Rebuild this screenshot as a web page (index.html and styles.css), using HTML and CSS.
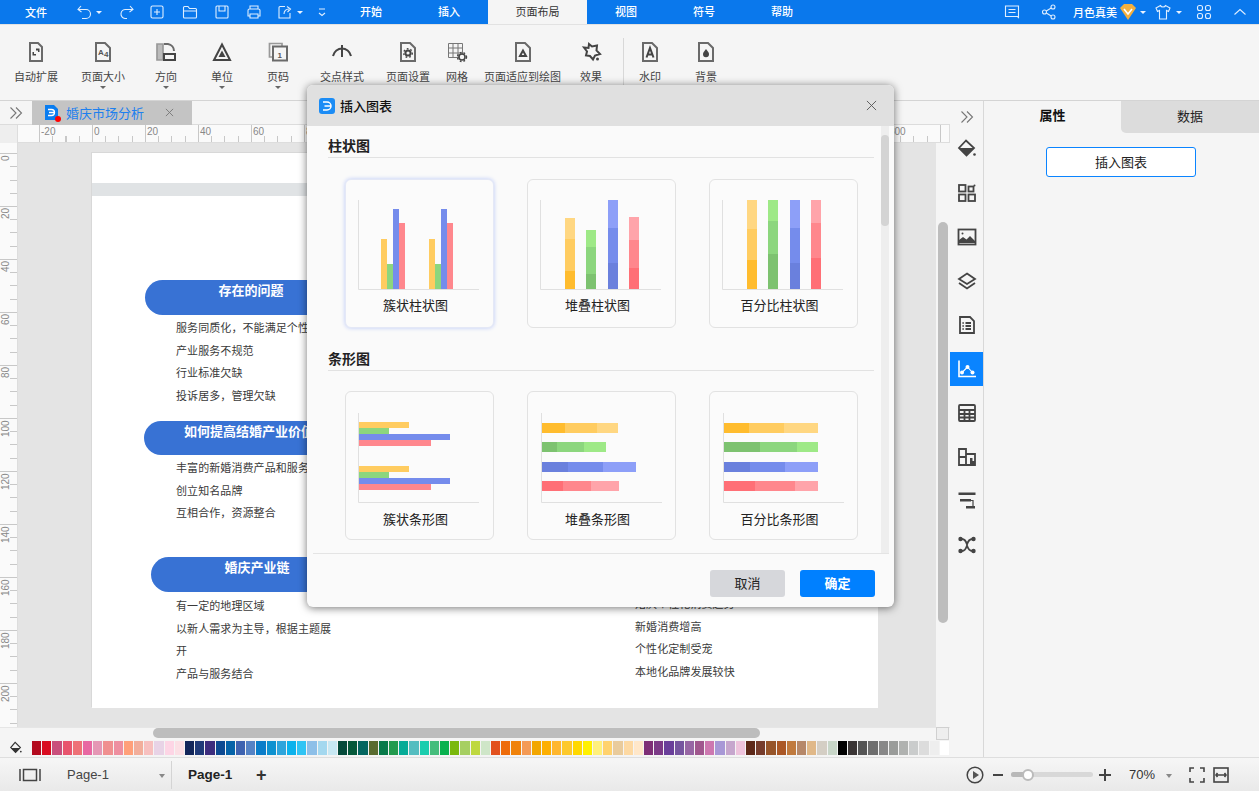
FILE: index.html
```html
<!DOCTYPE html>
<html lang="zh-CN">
<head>
<meta charset="utf-8">
<title>婚庆市场分析</title>
<link rel="stylesheet" href="styles.css">
</head>
<body>
<div class="app">
  <header class="titlebar">
    <div class="tb-file">文件</div>
    <div class="qa">
      <svg class="ic16" viewBox="0 0 16 16"><path d="M5 2 2 5.500 5.500 8M2.500 5.500H10a4 4 0 0 1 0 9H6"/></svg>
      <span class="caret-w ml-4"></span>
      <svg class="ic16 ml-17" viewBox="0 0 16 16"><path d="M11 2 14 5.500 10.500 8M13.500 5.500H7a4.500 4.500 0 0 0-1 9h2"/></svg>
      <svg class="ic16 ml-14" viewBox="0 0 16 16"><rect x="2" y="2" width="12" height="12" rx="1.500"/><path d="M8 5v6M5 8h6"/></svg>
      <svg class="ic16 ml-17" viewBox="0 0 16 16"><path d="M1.500 13V3.500a1 1 0 0 1 1-1h3.500l1.500 2h6a1 1 0 0 1 1 1V13a1 1 0 0 1-1 1h-11a1 1 0 0 1-1-1zM1.500 7h13"/></svg>
      <svg class="ic16 ml-16" viewBox="0 0 16 16"><rect x="2" y="2" width="12" height="12" rx="1"/><path d="M5 2v5h6V2"/></svg>
      <svg class="ic16 ml-16" viewBox="0 0 16 16"><path d="M4 5V2h8v3M4 12H2V6.500a1.500 1.500 0 0 1 1.500-1.500h9A1.500 1.500 0 0 1 14 6.500V12h-2M4 10h8v4H4z"/></svg>
      <svg class="ic16 ml-15" viewBox="0 0 16 16"><path d="M8 2.500H3a1 1 0 0 0-1 1V14h11V9M7 10c0-3 2-5 5-5M10 2.500l3.500 2.500-3 3"/></svg>
      <span class="caret-w ml-4"></span>
      <svg class="ic12 ml-13" viewBox="0 0 12 16"><path d="M3 5h6M3 9l3 2.500L9 9"/></svg>
    </div>
    <nav class="tb-tabs">
      <span class="tb-tab">开始</span>
      <span class="tb-tab">插入</span>
      <span class="tb-tab tb-tab-on">页面布局</span>
      <span class="tb-tab">视图</span>
      <span class="tb-tab">符号</span>
      <span class="tb-tab">帮助</span>
    </nav>
    <div class="tb-right">
      <svg class="ic16" viewBox="0 0 16 16"><path d="M1.500 2h13v11.500l-1-1h-12zM4.500 5.500h7M4.500 8.500h7"/></svg>
      <svg class="ic16 ml-21" viewBox="0 0 16 16"><circle cx="3.500" cy="8" r="2"/><circle cx="12" cy="3" r="2"/><circle cx="12" cy="13" r="2"/><path d="M5.300 7 10.200 4M5.300 9l4.900 3"/></svg>
      <span class="tb-user ml-16">月色真美</span>
      <svg class="vip ml-2" viewBox="0 0 18 18"><path class="vip-gem" d="M1 5 5 1h8l4 4-8 12z"/><path class="vip-v" d="M5 6l4 5 4-5"/></svg>
      <span class="caret-w ml-3"></span>
      <svg class="ic16 ml-9" viewBox="0 0 16 16"><path d="M5.500 1.500 1 4l1.500 3.500 2-1V15h7V6.500l2 1L15 4l-4.500-2.500C10 3.500 6 3.500 5.500 1.500z"/></svg>
      <span class="caret-w ml-5"></span>
      <svg class="ic16 ml-14" viewBox="0 0 16 16"><rect x="1.500" y="1.500" width="5" height="5" rx="2"/><rect x="9.500" y="1.500" width="5" height="5" rx="2"/><rect x="1.500" y="9.500" width="5" height="5" rx="2"/><rect x="9.500" y="9.500" width="5" height="5" rx="2"/></svg>
      <svg class="ic16 ml-20" viewBox="0 0 16 16"><path d="M2.500 10.500 8 5.500l5.500 5"/></svg>
    </div>
  </header>

  <section class="ribbon">
    <div class="rb-item">
      <svg class="rb-ic" viewBox="0 0 22 22"><path class="l" d="M5 2h8l4 4v14H5z"/><path class="f" d="M11 7.500h3.500V11H13V9.500h-2zM7.500 11H9v2h2v1.500H7.500z"/></svg>
      <span>自动扩展</span>
    </div>
    <div class="rb-item ml-23">
      <svg class="rb-ic" viewBox="0 0 22 22"><path class="l" d="M4 2h9l5 5v13H4z"/><text class="rb-tx" x="6" y="14">A</text><text class="rb-tx" x="12" y="16">4</text></svg>
      <span>页面大小</span><i class="caret-g"></i>
    </div>
    <div class="rb-item ml-30">
      <svg class="rb-ic" viewBox="0 0 22 22"><path class="lg" d="M2 19V3h6v16z"/><path class="l" d="M9 3h4a7 7 0 0 1 6 7"/><path class="k" d="M9 13h11v6H9z"/></svg>
      <span>方向</span><i class="caret-g"></i>
    </div>
    <div class="rb-item ml-34">
      <svg class="rb-ic" viewBox="0 0 22 22"><path class="k" d="M11 3.500 3 19h16z"/><path class="f" d="M11 9.500 7.500 16h7z"/></svg>
      <span>单位</span><i class="caret-g"></i>
    </div>
    <div class="rb-item ml-34">
      <svg class="rb-ic" viewBox="0 0 22 22"><path class="lo" d="M15 5V2.500H2.500V16H6"/><rect class="l" x="6" y="5.500" width="14" height="14"/><text class="rb-tx" x="10.500" y="17">1</text></svg>
      <span>页码</span><i class="caret-g"></i>
    </div>
    <div class="rb-item ml-31">
      <svg class="rb-ic" viewBox="0 0 22 22"><path class="k" d="M2 15c1-4.500 5-7.500 9-7.500s8 3 9 7.500M11 4v12"/></svg>
      <span>交点样式</span>
    </div>
    <div class="rb-item ml-22">
      <svg class="rb-ic" viewBox="0 0 22 22"><path class="l" d="M4 2h9l5 5v13H4z"/><circle class="ring" cx="11" cy="12" r="2.600"/><circle class="teeth" cx="11" cy="12" r="4.300"/></svg>
      <span>页面设置</span>
    </div>
    <div class="rb-item ml-16">
      <svg class="rb-ic" viewBox="0 0 22 22"><path class="thin" d="M2.500 2.500h14v14h-14zM7 2.500v14M12 2.500v14M2.500 7h14M2.500 12h14"/><circle class="gear" cx="16" cy="16" r="3"/><circle class="teeth" cx="16" cy="16" r="4.500"/></svg>
      <span>网格</span>
    </div>
    <div class="rb-item ml-16">
      <svg class="rb-ic" viewBox="0 0 22 22"><path class="l" d="M4 2h9l5 5v13H4z"/><path class="k" d="M11 9.500l-3 5.500h6z"/></svg>
      <span>页面适应到绘图</span>
    </div>
    <div class="rb-item ml-19">
      <svg class="rb-ic" viewBox="0 0 22 22"><path class="k" d="M9 3l3 2.500 5-1-.5 5L20 13l-5 1.500-2 4-3-3.500-4-.5 1-4L4 6.500 8.500 7z"/><circle class="f" cx="17.500" cy="18" r="1.500"/></svg>
      <span>效果</span>
    </div>
    <div class="rb-sep"></div>
    <div class="rb-item ml-15">
      <svg class="rb-ic" viewBox="0 0 22 22"><path class="l" d="M4 2h9l5 5v13H4z"/><path class="k" d="M7.500 16.500 11 7l3.500 9.500M8.500 13.500h5"/></svg>
      <span>水印</span>
    </div>
    <div class="rb-item ml-34">
      <svg class="rb-ic" viewBox="0 0 22 22"><path class="l" d="M4 2h9l5 5v13H4z"/><path class="f" d="M11 8c2 2.500 3 3.700 3 5.200a3 3 0 0 1-6 0C8 11.700 9 10.500 11 8z"/></svg>
      <span>背景</span>
    </div>
  </section>

  <div class="workspace">
    <div class="doc-col">
      <div class="doc-tabs">
        <svg class="chev" viewBox="0 0 14 14"><path d="M1.500 1.500 7 7l-5.500 5.500M7 1.500 12.500 7 7 12.500"/></svg>
        <div class="doc-tab">
          <span class="doc-ic">
            <svg viewBox="0 0 13 15"><path class="doc-blue" d="M0 0h9l4 4v11H0z"/><path class="doc-d" d="M3 4.500h3.500a3 3 0 0 1 0 6H3M4 7.500h5"/></svg>
            <i class="doc-dot"></i>
          </span>
          <span class="doc-name">婚庆市场分析</span>
          <svg class="doc-x" viewBox="0 0 10 10"><path d="M1 1l8 8M9 1l-8 8"/></svg>
        </div>
      </div>
      <div class="ruler-row">
        <div class="ruler-corner"></div>
        <div class="ruler-h">
          <span>-20</span><span>0</span><span>20</span><span>40</span><span>60</span><span>80</span><span>100</span><span>120</span><span>140</span><span>160</span><span>180</span><span>200</span><span>220</span><span>240</span><span>260</span><span>280</span><span>300</span>
        </div>
      </div>
      <div class="canvas-row">
        <div class="ruler-v">
          <span>0</span><span>20</span><span>40</span><span>60</span><span>80</span><span>100</span><span>120</span><span>140</span><span>160</span><span>180</span><span>200</span>
        </div>
        <div class="canvas">
          <div class="page">
            <div class="band"></div>
            <div class="pill pill-a">存在的问题</div>
            <ul class="list list-a">
              <li>服务同质化，不能满足个性化需求</li>
              <li>产业服务不规范</li>
              <li>行业标准欠缺</li>
              <li>投诉居多，管理欠缺</li>
            </ul>
            <div class="pill pill-b">如何提高结婚产业价值</div>
            <ul class="list list-b">
              <li>丰富的新婚消费产品和服务</li>
              <li>创立知名品牌</li>
              <li>互相合作，资源整合</li>
            </ul>
            <div class="pill pill-c">婚庆产业链</div>
            <ul class="list list-c">
              <li>有一定的地理区域</li>
              <li>以新人需求为主导，根据主题展</li>
              <li>开</li>
              <li>产品与服务结合</li>
            </ul>
            <ul class="list list-d">
              <li>婚庆个性化消费趋势</li>
              <li>新婚消费增高</li>
              <li>个性化定制受宠</li>
              <li>本地化品牌发展较快</li>
            </ul>
          </div>
        </div>
        <div class="vscroll"><div class="vthumb"></div></div>
      </div>
      <div class="hscroll-row">
        <div class="hthumb"></div>
        <div class="scroll-corner"></div>
      </div>
      <div class="palette">
        <svg class="paint" viewBox="0 0 16 16"><path class="paint-o" d="M7 1.500 2 7.500 7.500 13 13 7.500z"/><path class="paint-f" d="M2.500 8h10L7.500 13z"/><circle class="paint-f" cx="13.500" cy="12" r="1"/></svg>
        <div class="swatches">
          <i class="c1"></i><i class="c2"></i><i class="c3"></i><i class="c4"></i><i class="c5"></i><i class="c6"></i><i class="c7"></i><i class="c8"></i><i class="c9"></i><i class="c10"></i><i class="c11"></i><i class="c12"></i><i class="c13"></i><i class="c14"></i><i class="c15"></i>
          <i class="c16"></i><i class="c17"></i><i class="c18"></i><i class="c19"></i><i class="c20"></i><i class="c21"></i><i class="c22"></i><i class="c23"></i><i class="c24"></i><i class="c25"></i><i class="c26"></i><i class="c27"></i><i class="c28"></i><i class="c29"></i><i class="c30"></i>
          <i class="c31"></i><i class="c32"></i><i class="c33"></i><i class="c34"></i><i class="c35"></i><i class="c36"></i><i class="c37"></i><i class="c38"></i><i class="c39"></i><i class="c40"></i><i class="c41"></i><i class="c42"></i><i class="c43"></i><i class="c44"></i><i class="c45"></i>
          <i class="c46"></i><i class="c47"></i><i class="c48"></i><i class="c49"></i><i class="c50"></i><i class="c51"></i><i class="c52"></i><i class="c53"></i><i class="c54"></i><i class="c55"></i><i class="c56"></i><i class="c57"></i><i class="c58"></i><i class="c59"></i><i class="c60"></i>
          <i class="c61"></i><i class="c62"></i><i class="c63"></i><i class="c64"></i><i class="c65"></i><i class="c66"></i><i class="c67"></i><i class="c68"></i><i class="c69"></i><i class="c70"></i>
          <i class="c71"></i><i class="c72"></i><i class="c73"></i><i class="c74"></i><i class="c75"></i><i class="c76"></i><i class="c77"></i><i class="c78"></i><i class="c79"></i>
          <i class="c80"></i><i class="c81"></i><i class="c82"></i><i class="c83"></i><i class="c84"></i><i class="c85"></i><i class="c86"></i><i class="c87"></i><i class="c88"></i><i class="c89"></i><i class="c90"></i>
        </div>
      </div>
    </div>

    <aside class="strip">
      <svg class="chev chev-r" viewBox="0 0 14 14"><path d="M1.500 1.500 7 7l-5.500 5.500M7 1.500 12.500 7 7 12.500"/></svg>
      <div class="st-btn"><svg viewBox="0 0 20 20"><path class="s" d="M9 1.500 2 9l7.500 7.500L17 9z"/><path class="sf" d="M2.500 9h14.500l-7.500 7.500z"/><circle class="sf" cx="17.500" cy="15.500" r="1.300"/></svg></div>
      <div class="st-btn"><svg viewBox="0 0 20 20"><rect class="s" x="2" y="2" width="6.500" height="6.500"/><rect class="s" x="11.500" y="3.500" width="5" height="5"/><rect class="s" x="2" y="11.500" width="6.500" height="6.500"/><rect class="s" x="11.500" y="11.500" width="6.500" height="6.500"/><circle class="sf" cx="17.500" cy="2.500" r="1"/></svg></div>
      <div class="st-btn"><svg viewBox="0 0 20 20"><rect class="s" x="1.500" y="2.500" width="17" height="15"/><path class="sf" d="M2 16v-3l4-3 3.500 2.500L13 9l5 5v2z"/><circle class="sf" cx="5.500" cy="6.500" r="1"/></svg></div>
      <div class="st-btn"><svg viewBox="0 0 20 20"><path class="s" d="M10 2.500 18 8l-8 5-8-5z"/><path class="s" d="M2 12l8 5.500 8-5.500"/></svg></div>
      <div class="st-btn"><svg viewBox="0 0 20 20"><path class="s" d="M3 2h10l4 4v12H3z"/><path class="s" d="M8.500 8H14M8.500 11H14M8.500 14H14"/><path class="s" d="M5.500 8h1.200M5.500 11h1.200M5.500 14h1.200"/></svg></div>
      <div class="st-btn st-on"><svg viewBox="0 0 20 20"><path class="w" d="M2 1.500v16h17"/><path class="w-thin" d="M5 13.500 10.500 8l5 5.500"/><circle class="wf" cx="5" cy="13.500" r="2"/><circle class="wf" cx="10.500" cy="8" r="2"/><circle class="wf" cx="15.500" cy="13.500" r="2"/></svg></div>
      <div class="st-btn"><svg viewBox="0 0 20 20"><rect class="s" x="2" y="2" width="16" height="16" rx="1"/><path class="s" d="M2 7h16M2 11h16M2 14.500h16M7.500 7v11M12.500 7v11"/></svg></div>
      <div class="st-btn"><svg viewBox="0 0 20 20"><path class="s" d="M2 2h7v5h9v11H2zM2 10h7v8M9 7v3"/><path class="sf" d="M13 11h2.500v3H18v4h-5z"/></svg></div>
      <div class="st-btn"><svg viewBox="0 0 20 20"><path class="sf" d="M1.500 1.500h17v2.500h-17zM3 8h11v2.500H3zM9 15h9v2.500H9z"/><path class="s-thin" d="M14 9.500h2V15"/></svg></div>
      <div class="st-btn"><svg viewBox="0 0 20 20"><path class="s" d="M5 4c3 0 4 2 5 5.500C11 6 13 4 15.500 4M5 16c3 0 4-2 5-5.500 1 3.500 3 5.500 5.500 5.500"/><circle class="sf" cx="3.500" cy="4" r="2.200"/><circle class="sf" cx="16.500" cy="4" r="2.200"/><circle class="sf" cx="3.500" cy="16" r="2.200"/><circle class="sf" cx="16.500" cy="16" r="2.200"/></svg></div>
    </aside>

    <aside class="panel">
      <div class="panel-tabs">
        <div class="pt pt-on">属性</div>
        <div class="pt pt-off">数据</div>
      </div>
      <button class="panel-btn">插入图表</button>
    </aside>
  </div>

  <footer class="status">
    <svg class="st-page" viewBox="0 0 22 14"><path d="M1 1v12M21 1v12"/><rect x="4.500" y="1.500" width="13" height="11"/></svg>
    <span class="st-name">Page-1</span>
    <i class="caret-s"></i>
    <span class="st-sep"></span>
    <span class="st-cur">Page-1</span>
    <span class="st-add">+</span>
    <div class="st-right">
      <svg class="st-play" viewBox="0 0 18 18"><circle cx="9" cy="9" r="7.800"/><path class="st-tri" d="M7 5l6 4-6 4z"/></svg>
      <span class="zbar ml-9"></span>
      <div class="slider ml-8"><span class="slider-fill"></span><span class="slider-knob"></span></div>
      <span class="zplus ml-6"></span>
      <span class="zoom-val">70%</span>
      <i class="caret-s ml-11"></i>
      <svg class="st-full ml-17" viewBox="0 0 16 16"><path d="M1 5V1h4M11 1h4v4M15 11v4h-4M5 15H1v-4"/></svg>
      <svg class="st-full ml-8" viewBox="0 0 16 16"><rect x="1" y="1" width="14" height="14"/><path d="M4 8h8M4.500 6 3 8l1.500 2M11.500 6 13 8l-1.500 2"/></svg>
    </div>
  </footer>

  <div class="dialog">
    <div class="dlg-head">
      <svg class="dlg-logo" viewBox="0 0 16 16"><rect class="dlg-logo-bg" width="16" height="16" rx="3"/><path class="dlg-logo-d" d="M4 4h4a4 4 0 0 1 0 8H4M5.500 8H12"/></svg>
      <span class="dlg-title">插入图表</span>
      <svg class="dlg-close" viewBox="0 0 12 12"><path d="M1 1l10 10M11 1 1 11"/></svg>
    </div>
    <div class="dlg-body">
      <div class="dlg-scroll">
        <h3 class="sec-title">柱状图</h3>
        <div class="cards">
          <div class="card card-on">
            <svg class="chart" viewBox="0 0 121 90">
              <path class="axis" d="M.5 0v89.500H121"/>
              <rect class="y2" x="23" y="39" width="6" height="50"/><rect class="g2" x="29" y="64" width="6" height="25"/><rect class="b2" x="35" y="9" width="6" height="80"/><rect class="r2" x="41" y="23" width="6" height="66"/>
              <rect class="y2" x="71" y="39" width="6" height="50"/><rect class="g2" x="77" y="64" width="6" height="25"/><rect class="b2" x="83" y="9" width="6" height="80"/><rect class="r2" x="89" y="23" width="6" height="66"/>
            </svg>
            <p class="card-name">簇状柱状图</p>
          </div>
          <div class="card">
            <svg class="chart" viewBox="0 0 121 90">
              <path class="axis" d="M.5 0v89.500H121"/>
              <rect class="y1" x="25" y="18" width="10" height="21"/><rect class="y2" x="25" y="39" width="10" height="32"/><rect class="y3" x="25" y="71" width="10" height="18"/>
              <rect class="g1" x="46" y="30" width="10" height="17"/><rect class="g2" x="46" y="47" width="10" height="27"/><rect class="g3" x="46" y="74" width="10" height="15"/>
              <rect class="b1" x="68" y="0" width="10" height="28"/><rect class="b2" x="68" y="28" width="10" height="35"/><rect class="b3" x="68" y="63" width="10" height="26"/>
              <rect class="r1" x="89" y="17" width="10" height="23"/><rect class="r2" x="89" y="40" width="10" height="28"/><rect class="r3" x="89" y="68" width="10" height="21"/>
            </svg>
            <p class="card-name">堆叠柱状图</p>
          </div>
          <div class="card">
            <svg class="chart" viewBox="0 0 121 90">
              <path class="axis" d="M.5 0v89.500H121"/>
              <rect class="y1" x="25" y="0" width="10" height="29"/><rect class="y2" x="25" y="29" width="10" height="31"/><rect class="y3" x="25" y="60" width="10" height="29"/>
              <rect class="g1" x="46" y="0" width="10" height="21"/><rect class="g2" x="46" y="21" width="10" height="33"/><rect class="g3" x="46" y="54" width="10" height="35"/>
              <rect class="b1" x="68" y="0" width="10" height="28"/><rect class="b2" x="68" y="28" width="10" height="35"/><rect class="b3" x="68" y="63" width="10" height="26"/>
              <rect class="r1" x="89" y="0" width="10" height="23"/><rect class="r2" x="89" y="23" width="10" height="35"/><rect class="r3" x="89" y="58" width="10" height="31"/>
            </svg>
            <p class="card-name">百分比柱状图</p>
          </div>
        </div>
        <h3 class="sec-title sec-second">条形图</h3>
        <div class="cards cards-bar">
          <div class="card">
            <svg class="chart" viewBox="0 0 121 90">
              <path class="axis" d="M.5 0v89.500H121"/>
              <rect class="y2" x="1" y="9" width="50" height="6"/><rect class="g2" x="1" y="15" width="30" height="6"/><rect class="b2" x="1" y="21" width="91" height="6"/><rect class="r2" x="1" y="27" width="72" height="6"/>
              <rect class="y2" x="1" y="53" width="50" height="6"/><rect class="g2" x="1" y="59" width="30" height="6"/><rect class="b2" x="1" y="65" width="91" height="6"/><rect class="r2" x="1" y="71" width="72" height="6"/>
            </svg>
            <p class="card-name">簇状条形图</p>
          </div>
          <div class="card">
            <svg class="chart" viewBox="0 0 121 90">
              <path class="axis" d="M.5 0v89.500H121"/>
              <rect class="y3" x="1" y="10" width="23" height="10"/><rect class="y2" x="24" y="10" width="32" height="10"/><rect class="y1" x="56" y="10" width="21" height="10"/>
              <rect class="g3" x="1" y="29" width="15" height="10"/><rect class="g2" x="16" y="29" width="27" height="10"/><rect class="g1" x="43" y="29" width="22" height="10"/>
              <rect class="b3" x="1" y="49" width="26" height="10"/><rect class="b2" x="27" y="49" width="35" height="10"/><rect class="b1" x="62" y="49" width="33" height="10"/>
              <rect class="r3" x="1" y="68" width="21" height="10"/><rect class="r2" x="22" y="68" width="28" height="10"/><rect class="r1" x="50" y="68" width="28" height="10"/>
            </svg>
            <p class="card-name">堆叠条形图</p>
          </div>
          <div class="card">
            <svg class="chart" viewBox="0 0 121 90">
              <path class="axis" d="M.5 0v89.500H121"/>
              <rect class="y3" x="1" y="10" width="25" height="10"/><rect class="y2" x="26" y="10" width="35" height="10"/><rect class="y1" x="61" y="10" width="34" height="10"/>
              <rect class="g3" x="1" y="29" width="36" height="10"/><rect class="g2" x="37" y="29" width="37" height="10"/><rect class="g1" x="74" y="29" width="21" height="10"/>
              <rect class="b3" x="1" y="49" width="26" height="10"/><rect class="b2" x="27" y="49" width="35" height="10"/><rect class="b1" x="62" y="49" width="33" height="10"/>
              <rect class="r3" x="1" y="68" width="31" height="10"/><rect class="r2" x="32" y="68" width="40" height="10"/><rect class="r1" x="72" y="68" width="23" height="10"/>
            </svg>
            <p class="card-name">百分比条形图</p>
          </div>
        </div>
      </div>
      <div class="dlg-track"><div class="dlg-thumb"></div></div>
    </div>
    <div class="dlg-foot">
      <button class="btn btn-cancel">取消</button>
      <button class="btn btn-ok">确定</button>
    </div>
  </div>
</div>
</body>
</html>
```

FILE: styles.css
```css
* { box-sizing: border-box; }
html, body { margin: 0; padding: 0; }
body {
  font-family: "Liberation Sans", "Noto Sans CJK SC", sans-serif;
  font-size: 11px;
  color: #333;
  background: #f5f5f5;
}
svg { display: block; flex: none; }
ul, p, h3 { margin: 0; padding: 0; }
li { list-style: none; }
button { font-family: inherit; cursor: pointer; }

.app {
  position: relative;
  width: 1259px;
  height: 791px;
  overflow: hidden;
  display: flex;
  flex-direction: column;
}

.ml-2 { margin-left: 2px; }
.ml-3 { margin-left: 3px; }
.ml-4 { margin-left: 4px; }
.ml-5 { margin-left: 5px; }
.ml-6 { margin-left: 6px; }
.ml-8 { margin-left: 8px; }
.ml-9 { margin-left: 9px; }
.ml-11 { margin-left: 11px; }
.ml-13 { margin-left: 13px; }
.ml-14 { margin-left: 14px; }
.ml-15 { margin-left: 15px; }
.ml-16 { margin-left: 16px; }
.ml-17 { margin-left: 17px; }
.ml-19 { margin-left: 19px; }
.ml-20 { margin-left: 20px; }
.ml-21 { margin-left: 21px; }
.ml-22 { margin-left: 22px; }
.ml-23 { margin-left: 23px; }
.ml-30 { margin-left: 30px; }
.ml-31 { margin-left: 31px; }
.ml-34 { margin-left: 34px; }

/* title bar */
.titlebar {
  flex: none;
  height: 24px;
  background: #0a78ec;
  color: #fff;
  display: flex;
  align-items: center;
}
.tb-file { width: 72px; text-align: center; font-weight: 500; }
.qa { display: flex; align-items: center; margin-left: 4px; }
.ic16, .ic12 { fill: none; stroke: #dfeeff; stroke-width: 1.1; }
.ic16 { width: 16px; height: 16px; }
.ic12 { width: 12px; height: 16px; }
.caret-w {
  width: 0; height: 0; flex: none;
  border: 3px solid transparent;
  border-top: 3px solid #e8f2ff;
  border-bottom: 0;
}
.tb-tabs { display: flex; margin-left: 4px; height: 24px; }
.tb-tab { width: 78px; line-height: 24px; text-align: center; font-weight: 500; }
.tb-tab-on { width: 99px; background: #f5f5f5; color: #333; font-weight: 400; }
.tb-right { margin-left: auto; padding-right: 11px; display: flex; align-items: center; }
.tb-user { font-weight: 500; }
.vip { width: 18px; height: 18px; }
.vip-gem { fill: #f3b03f; }
.vip-v { fill: none; stroke: #fff; stroke-width: 1.6; }

/* ribbon */
.ribbon {
  flex: none;
  height: 76px;
  background: #f5f5f5;
  display: flex;
  align-items: flex-start;
  padding: 16px 0 0 14px;
  border-top: 1px solid #e2e2e2;
}
.rb-item { display: flex; flex-direction: column; align-items: center; color: #444; }
.rb-item span { line-height: 14px; margin-top: 7px; white-space: nowrap; }
.rb-ic { width: 22px; height: 22px; }
.rb-ic .l { fill: none; stroke: #6a6a6a; stroke-width: 2; }
.rb-ic .k { fill: none; stroke: #444; stroke-width: 2; }
.rb-ic .lg { fill: #bbb; stroke: #999; stroke-width: 1.7; }
.rb-ic .lo { fill: none; stroke: #999; stroke-width: 1.7; }
.rb-ic .f { fill: #444; }
.rb-ic .ring { fill: none; stroke: #444; stroke-width: 2; }
.rb-ic .teeth { fill: none; stroke: #444; stroke-width: 1.4; stroke-dasharray: 1.7 2; }
.rb-ic .thin { fill: none; stroke: #777; stroke-width: 1; }
.rb-ic .gear { fill: #f5f5f5; stroke: #444; stroke-width: 1.5; }
.rb-tx { font-size: 8px; font-weight: 700; fill: #555; }
.caret-g {
  width: 0; height: 0; margin-top: 2px;
  border: 3px solid transparent;
  border-top: 3px solid #666;
  border-bottom: 0;
}
.rb-sep { width: 1px; height: 49px; background: #d8d8d8; margin: -3px 0 0 21px; }

/* workspace */
.workspace { flex: 1; min-height: 0; display: flex; border-top: 1px solid #d4d4d4; }
.doc-col { flex: none; width: 950px; display: flex; flex-direction: column; }
.doc-tabs { flex: none; height: 24px; display: flex; align-items: center; background: #f5f5f5; border-bottom: 1px solid #dcdcdc; }
.chev { width: 14px; height: 14px; margin-left: 9px; fill: none; stroke: #777; stroke-width: 1.1; }
.doc-tab {
  width: 160px; height: 24px; margin-left: 9px; padding-left: 13px;
  background: #c4c4c4;
  display: flex; align-items: center;
}
.doc-ic { position: relative; width: 13px; height: 15px; }
.doc-ic svg { width: 13px; height: 15px; }
.doc-blue { fill: #0a7df0; }
.doc-d { fill: none; stroke: #fff; stroke-width: 1.3; }
.doc-dot { position: absolute; right: -3px; bottom: -2px; width: 6px; height: 6px; border-radius: 50%; background: #f00; }
.doc-name { margin-left: 8px; font-size: 13px; color: #1e80ee; white-space: nowrap; }
.doc-x { width: 9px; height: 9px; margin-left: 21px; fill: none; stroke: #777; stroke-width: 1; }

.ruler-row { flex: none; height: 18px; display: flex; }
.ruler-corner { flex: none; width: 18px; background: #eee; border-right: 1px solid #ddd; }
.ruler-h {
  flex: 1;
  display: flex;
  overflow: hidden;
  padding-left: 21px;
  background-color: #fafafa;
  background-image:
    repeating-linear-gradient(to right, #c8c8c8 0 1px, transparent 1px 53px),
    repeating-linear-gradient(to right, #c8c8c8 0 1px, transparent 1px 13.25px);
  background-size: 100% 100%, 100% 6px;
  background-position: 21px 0, 21px bottom;
  background-repeat: no-repeat;
  border-right: 1px solid #ddd;
  border-bottom: 1px solid #ddd;
}
.ruler-h span { flex: none; width: 53px; padding-left: 2px; font-size: 10px; line-height: 13px; color: #888; font-family: "Liberation Sans", sans-serif; }
.canvas-row { flex: 1; min-height: 0; display: flex; }
.ruler-v {
  flex: none;
  width: 18px;
  display: flex;
  flex-direction: column;
  overflow: hidden;
  padding-top: 10px;
  background-color: #fafafa;
  background-image:
    repeating-linear-gradient(to bottom, #c8c8c8 0 1px, transparent 1px 53px),
    repeating-linear-gradient(to bottom, #c8c8c8 0 1px, transparent 1px 13.25px);
  background-size: 100% 100%, 7px 100%;
  background-position: 0 10px, right 10px;
  background-repeat: no-repeat;
  border-right: 1px solid #ddd;
}
.ruler-v span {
  flex: none;
  height: 53px;
  width: 12px;
  padding-bottom: 2px;
  writing-mode: vertical-rl;
  transform: rotate(180deg);
  text-align: right;
  font-size: 10px;
  line-height: 12px;
  color: #888;
  font-family: "Liberation Sans", sans-serif;
}
.canvas { position: relative; flex: 1; min-width: 0; background: #e4e4e4; overflow: hidden; }
.page {
  position: absolute;
  left: 74px;
  top: 10px;
  width: 786px;
  height: 555px;
  background: #fff;
  box-shadow: -1px -1px 0 #d8d8d8;
}
.band { position: absolute; left: 0; right: 0; top: 30px; height: 13px; background: #e0e3e5; }
.pill {
  position: absolute;
  height: 35px;
  padding-top: 2px;
  border-radius: 18px 0 0 18px;
  background: #3872d4;
  color: #fff;
  font-size: 13px;
  font-weight: 700;
  line-height: 18px;
  text-align: center;
  white-space: nowrap;
}
.pill-a { left: 53px; top: 127px; width: 212px; }
.pill-b { left: 52px; top: 268px; width: 210px; height: 34px; }
.pill-c { left: 59px; top: 404px; width: 212px; }
.list { position: absolute; font-size: 11px; letter-spacing: .08px; color: #3a3a3a; }
.list li { line-height: 22.700px; white-space: nowrap; }
.list-a { left: 84px; top: 164px; }
.list-b { left: 84px; top: 304px; }
.list-c { left: 84px; top: 442px; }
.list-d { left: 543px; top: 440px; }
.vscroll { flex: none; width: 14px; background: #f5f5f5; padding-left: 2px; }
.vthumb { width: 10px; height: 401px; margin-top: 79px; border-radius: 5px; background: #bdbdbd; }
.hscroll-row { flex: none; height: 13px; display: flex; background: #f5f5f5; border-top: 1px solid #e6e6e6; }
.hthumb { width: 607px; height: 10px; margin-left: 153px; border-radius: 5px; background: #bdbdbd; }
.scroll-corner { width: 13px; height: 13px; margin: -1px 0 0 176px; border: 1px solid #d0d0d0; background: #eee; }
.palette { flex: none; height: 17px; display: flex; align-items: flex-start; padding-top: 1px; background: #f4f4f4; }
.paint { width: 14px; height: 14px; margin-left: 9px; }
.paint-o { fill: none; stroke: #333; stroke-width: 1.3; }
.paint-f { fill: #333; }
.swatches { width: 917px; height: 14px; margin-left: 9px; display: grid; grid-template-columns: repeat(90, 1fr); column-gap: 1px; }
.swatches i { display: block; }
.c1{background:#b30a1e}.c2{background:#d90c20}.c3{background:#c94f7c}.c4{background:#e8556e}.c5{background:#ee7177}.c6{background:#e868a2}.c7{background:#e597b5}.c8{background:#f09090}.c9{background:#ee8fa0}.c10{background:#ffa07a}.c11{background:#f2ae9b}.c12{background:#f7c0bf}.c13{background:#e8d3e6}.c14{background:#fdd5e5}.c15{background:#fbdfe5}
.c16{background:#12265a}.c17{background:#1f3a78}.c18{background:#3d2d7e}.c19{background:#0d4a92}.c20{background:#0563a8}.c21{background:#3e63b0}.c22{background:#5583c5}.c23{background:#0a7dc9}.c24{background:#0e92d0}.c25{background:#2ea5dc}.c26{background:#0cb2ec}.c27{background:#30c4f4}.c28{background:#8dbfe8}.c29{background:#a4d8ef}.c30{background:#c8e8f3}
.c31{background:#054a3a}.c32{background:#05593a}.c33{background:#046660}.c34{background:#596b2f}.c35{background:#087a4a}.c36{background:#229a4e}.c37{background:#05ab97}.c38{background:#55bdc0}.c39{background:#1bcdae}.c40{background:#45bd7c}.c41{background:#08b14f}.c42{background:#7ab80c}.c43{background:#a6cf62}.c44{background:#bfd840}.c45{background:#cfe6c8}
.c46{background:#e2511f}.c47{background:#ee6c0a}.c48{background:#f0820a}.c49{background:#f49a55}.c50{background:#f2a600}.c51{background:#fdaf00}.c52{background:#ffb72e}.c53{background:#fdc92c}.c54{background:#ffd800}.c55{background:#fff000}.c56{background:#fff07c}.c57{background:#ffd26e}.c58{background:#e9cb9c}.c59{background:#fdd9a3}.c60{background:#ffe7c9}
.c61{background:#7e2f77}.c62{background:#7c3a87}.c63{background:#6a3f9a}.c64{background:#76559f}.c65{background:#9766a4}.c66{background:#a0578e}.c67{background:#cd78b0}.c68{background:#a898d6}.c69{background:#c6a6cd}.c70{background:#eec3dc}
.c71{background:#5d2818}.c72{background:#763c2c}.c73{background:#97552a}.c74{background:#ab5826}.c75{background:#c07a3e}.c76{background:#b68869}.c77{background:#e0b888}.c78{background:#d4cec4}.c79{background:#c8d6c8}
.c80{background:#000}.c81{background:#3a3535}.c82{background:#555}.c83{background:#6e6e6e}.c84{background:#888}.c85{background:#9a9c9a}.c86{background:#b0b2b0}.c87{background:#cacccc}.c88{background:#dcdcdc}.c89{background:#eee}.c90{background:#fff}

/* side strip */
.strip {
  flex: none;
  width: 34px;
  background: #f5f5f5;
  border-right: 1px solid #d8d8d8;
  display: flex;
  flex-direction: column;
  align-items: center;
}
.chev-r { margin: 9px 0 8px; }
.st-btn { flex: none; width: 33px; height: 34px; margin-bottom: 10px; display: flex; align-items: center; justify-content: center; }
.st-btn svg { width: 20px; height: 20px; }
.st-on { background: #0a84ff; }
.s { fill: none; stroke: #444; stroke-width: 1.8; }
.s-thin { fill: none; stroke: #444; stroke-width: 1.2; }
.sf { fill: #444; }
.w { fill: none; stroke: #fff; stroke-width: 1.6; }
.w-thin { fill: none; stroke: #fff; stroke-width: 1.1; }
.wf { fill: #fff; }

/* right panel */
.panel { flex: 1; background: #f5f5f5; }
.panel-tabs { display: flex; height: 32px; }
.pt { width: 137px; text-align: center; font-size: 13px; line-height: 30px; color: #111; }
.pt-on { font-weight: 700; }
.pt-off { width: 138px; background: #dcdcdc; border-bottom-left-radius: 5px; line-height: 32px; color: #222; }
.panel-btn {
  display: block;
  width: 150px;
  height: 30px;
  margin: 14px 0 0 62px;
  padding: 0 0 2px;
  background: #fff;
  border: 1px solid #0a84ff;
  border-radius: 3px;
  font-size: 13px;
  color: #222;
}

/* status */
.status {
  flex: none;
  height: 34px;
  display: flex;
  align-items: center;
  padding-left: 19px;
  background: linear-gradient(#f6f6f6, #e9e9e9);
  border-top: 1px solid #dedede;
}
.st-page { width: 22px; height: 14px; fill: none; stroke: #444; stroke-width: 1.500; }
.st-name { width: 92px; margin-left: 26px; font-size: 13px; color: #444; }
.caret-s {
  width: 0; height: 0; flex: none;
  border: 3px solid transparent;
  border-top: 4px solid #888;
  border-bottom: 0;
  margin-top: 2px;
}
.st-sep { width: 1px; height: 28px; margin-left: 6px; background: #d4d4d4; }
.st-cur { width: 68px; margin-left: 16px; font-size: 13.500px; font-weight: 700; color: #222; }
.st-add { font-size: 18px; line-height: 18px; color: #333; font-weight: 700; }
.st-right { margin-left: auto; padding-right: 30px; display: flex; align-items: center; }
.st-play { width: 18px; height: 18px; fill: none; stroke: #444; stroke-width: 1.5; }
.st-tri { fill: #555; stroke: none; }
.zbar { width: 10px; height: 2px; background: #444; }
.slider { position: relative; width: 82px; height: 5px; border-radius: 3px; background: #d8d8d8; }
.slider-fill { position: absolute; left: 0; top: 0; width: 17px; height: 5px; border-radius: 3px; background: #b8b8b8; }
.slider-knob { position: absolute; left: 11px; top: -3.500px; width: 12px; height: 12px; border-radius: 50%; background: #fff; border: 2px solid #bbb; }
.zplus { position: relative; width: 12px; height: 2px; background: #444; }
.zplus::after { content: ""; position: absolute; left: 5px; top: -5px; width: 2px; height: 12px; background: #444; }
.zoom-val { width: 26px; margin-left: 18px; font-size: 13px; color: #333; white-space: nowrap; }
.st-full { width: 16px; height: 16px; fill: none; stroke: #444; stroke-width: 1.6; }

/* dialog */
.dialog {
  position: absolute;
  left: 307px;
  top: 85px;
  width: 587px;
  height: 522px;
  border-radius: 6px;
  overflow: hidden;
  background: #fafafa;
  box-shadow: 0 1px 9px rgba(0, 0, 0, .55);
  display: flex;
  flex-direction: column;
}
.dlg-head { flex: none; height: 41px; display: flex; align-items: center; padding-left: 12px; background: #e0e0e0; }
.dlg-logo { width: 16px; height: 16px; }
.dlg-logo-bg { fill: #1b8cf5; }
.dlg-logo-d { fill: none; stroke: #fff; stroke-width: 1.500; }
.dlg-title { margin-left: 5px; font-size: 13px; font-weight: 500; color: #111; }
.dlg-close { width: 11px; height: 11px; margin-left: auto; margin-right: 17px; fill: none; stroke: #555; stroke-width: 1; }
.dlg-body { flex: none; height: 428px; display: flex; margin-left: 6px; border-bottom: 1px solid #e4e4e4; width: 576px; }
.dlg-scroll { flex: none; width: 568px; height: 427px; overflow: hidden; padding-left: 15px; }
.sec-title {
  width: 546px;
  height: 32px;
  padding-top: 10px;
  font-size: 14px;
  line-height: 20px;
  font-weight: 700;
  color: #222;
  border-bottom: 1px solid #e2e2e2;
}
.sec-second { margin-top: 10px; height: 33px; padding-top: 11px; }
.cards { display: flex; gap: 33px; margin: 21px 0 0 17px; }
.cards-bar { margin-top: 20px; }
.card {
  flex: none;
  width: 149px;
  height: 149px;
  padding: 20px 0 0 12px;
  background: #fbfbfb;
  border: 1px solid #e2e2e2;
  border-radius: 6px;
}
.cards-bar .card { padding-top: 21px; }
.cards-bar .card + .card .chart { margin-left: 1px; }
.cards-bar .card-name { margin-top: 8px; }
.card-on { border-color: #e4e8f6; box-shadow: 0 0 4px #bccaf8; }
.chart { width: 121px; height: 90px; }
.axis { fill: none; stroke: #e0e0e0; stroke-width: 1; }
.card-name { margin: 7px 0 0 -20px; text-align: center; font-size: 13px; line-height: 17px; color: #222; }
.y1 { fill: #ffd782; } .y2 { fill: #ffcc60; } .y3 { fill: #ffbc2e; }
.g1 { fill: #9ee987; } .g2 { fill: #8cd67e; } .g3 { fill: #7dc270; }
.b1 { fill: #8d9ff8; } .b2 { fill: #758cec; } .b3 { fill: #6a80dd; }
.r1 { fill: #ffa4aa; } .r2 { fill: #ff878d; } .r3 { fill: #ff6f76; }
.dlg-track { flex: none; width: 8px; height: 427px; background: #eee; }
.dlg-thumb { width: 8px; height: 91px; margin-top: 9px; border-radius: 4px; background: #d4d4d4; }
.dlg-foot { flex: 1; display: flex; justify-content: flex-end; align-items: flex-start; gap: 15px; padding: 16px 19px 0 0; }
.btn { width: 75px; height: 27px; padding: 0 0 2px; border: 0; border-radius: 3px; font-size: 13px; }
.btn-cancel { background: #d6d7db; color: #222; }
.btn-ok { background: #0080ff; color: #fff; font-weight: 700; }
```
